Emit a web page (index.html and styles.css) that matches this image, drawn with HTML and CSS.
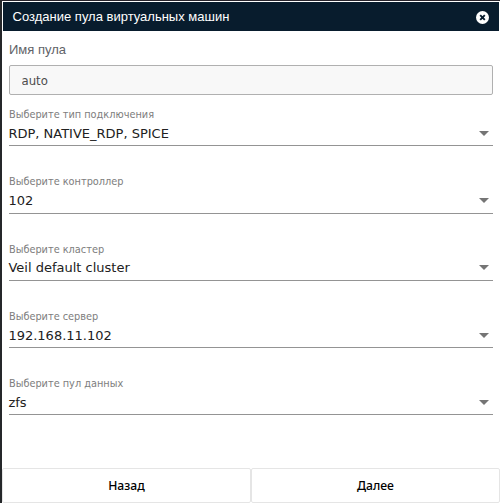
FILE: index.html
```
<!DOCTYPE html>
<html lang="ru">
<head>
<meta charset="utf-8">
<title>Создание пула виртуальных машин</title>
<link rel="stylesheet" href="styles.css">
</head>
<body>
<main class="dialog">
  <header class="header">
    <h1 class="title">Создание пула виртуальных машин</h1>
    <svg class="close" viewBox="0 0 13 13"><circle cx="6.5" cy="6.5" r="6.5"/><path d="M4.2 4.2l4.6 4.6M8.8 4.2l-4.6 4.6"/></svg>
  </header>
  <form class="form">
    <label class="name-label" for="name">Имя пула</label>
    <input class="name" id="name" value="auto">
    <div class="fields">
      <div class="field"><span class="label">Выберите тип подключения</span><div class="select"><span>RDP, NATIVE_RDP, SPICE</span><i class="arrow"></i></div></div>
      <div class="field"><span class="label">Выберите контроллер</span><div class="select"><span>102</span><i class="arrow"></i></div></div>
      <div class="field"><span class="label">Выберите кластер</span><div class="select"><span>Veil default cluster</span><i class="arrow"></i></div></div>
      <div class="field"><span class="label">Выберите сервер</span><div class="select"><span>192.168.11.102</span><i class="arrow"></i></div></div>
      <div class="field"><span class="label">Выберите пул данных</span><div class="select"><span>zfs</span><i class="arrow"></i></div></div>
    </div>
  </form>
  <footer class="actions"><button class="button">Назад</button><button class="button">Далее</button></footer>
</main>
</body>
</html>
```
FILE: styles.css
```
* { box-sizing: border-box; }
body { margin: 0; height: 503px; overflow: hidden; background: #fff; }
.dialog {
  display: flex;
  flex-direction: column;
  height: 503px;
  border-top: 1px solid #29252d;
  border-left: 2px solid #25272a;
  background: #fff;
}
.header {
  display: flex;
  align-items: center;
  justify-content: space-between;
  height: 29px;
  margin: 1px 1px 0;
  padding: 0 10px 0 9.6px;
  background: #081c2d;
}
.title { margin: 0; color: #fff; font: 400 13px/29px "Liberation Sans", sans-serif; }
.close { width: 13px; height: 13px; margin-top: 2px; fill: #fff; stroke: #081c2d; }
.close circle { stroke: none; }
.close path { stroke-width: 1.9; }
.form { flex: 1; padding: 11px 7px 0; }
.name-label { display: block; height: 23px; color: #5f6368; font: 13px/15px "Liberation Sans", sans-serif; }
.name {
  display: block;
  width: 100%;
  height: 30px;
  padding: 1px 11.5px 0;
  border: 1px solid #b0b0b0;
  border-radius: 2px;
  background: #f8f8f8;
  color: #4d4d4d;
  font: 13px "DejaVu Sans Condensed", "DejaVu Sans", sans-serif;
  font-stretch: condensed;
}
.fields { padding-top: 13px; }
.field { height: 67.25px; }
.label {
  display: block;
  height: 13.8px;
  color: #7d7d7d;
  font: 10.85px/14px "DejaVu Sans Condensed", "DejaVu Sans", sans-serif;
  font-stretch: condensed;
}
.select {
  display: flex;
  align-items: flex-start;
  justify-content: space-between;
  height: 24.5px;
  padding-right: 4px;
  border-bottom: 1px solid #949494;
  color: #212121;
  font: 13px/23px "DejaVu Sans", sans-serif;
}
.select span { margin-left: -0.6px; }
.arrow { margin-top: 9px; border: 5px solid transparent; border-top-color: #757575; border-bottom: 0; }
.actions { display: flex; height: 35px; }
.button {
  flex: 1;
  border: 1px solid #e5e5e5;
  border-radius: 2px;
  background: #fff;
  color: #000;
  font: 500 12.2px "Noto Sans", sans-serif;
}
```
